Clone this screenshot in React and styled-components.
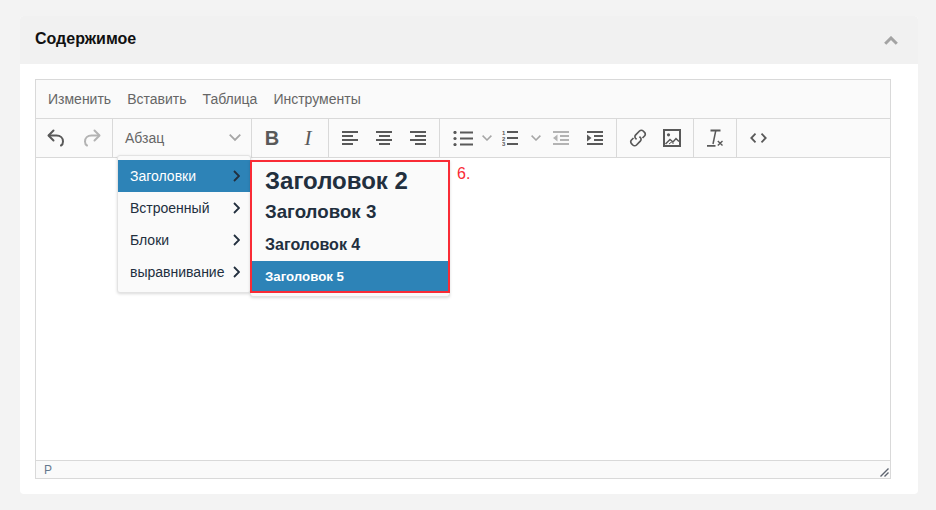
import React from "react";
import styled, { createGlobalStyle } from "styled-components";

const colors = {
  page: "#f3f3f3",
  header: "#f1f1f1",
  border: "#d9d9d9",
  bar: "#fafafa",
  icon: "#595959",
  muted: "#b3b3b3",
  chevron: "#a6a6a6",
  active: "#2d83b7",
  navy: "#222f3e",
  red: "#f92b35",
};

const GlobalStyle = createGlobalStyle`
  html, body {
    margin: 0;
    padding: 0;
    background: ${colors.page};
    font-family: "Liberation Sans", Arial, sans-serif;
  }
`;

const Chevron = ({ size = 12, color = colors.chevron }) => (
  <svg width={size} height={size * 0.6} viewBox="0 0 10 6" fill="none" stroke={color} strokeWidth="1.5">
    <path d="M.6.6 5 5 9.4.6" />
  </svg>
);

const ItemArrow = () => (
  <svg width="7" height="12" viewBox="0 0 7 12" fill="none" stroke={colors.navy} strokeWidth="1.800">
    <path d="M1 1l5 5-5 5" />
  </svg>
);

const Undo = ({ color }) => (
  <svg width="18" height="18" viewBox="0 0 18 18" fill="none" stroke={color} strokeWidth="2" strokeLinecap="round" strokeLinejoin="round">
    <path d="M6.500 1.500 1.500 6.500l5 5" />
    <path d="M2 6.500h7.500c4 0 6.500 2.500 6.500 6 0 2-1 3.500-2 4" />
  </svg>
);

const Redo = ({ color }) => (
  <svg width="18" height="18" viewBox="0 0 18 18" fill="none" stroke={color} strokeWidth="2" strokeLinecap="round" strokeLinejoin="round">
    <path d="M11.500 1.500l5 5-5 5" />
    <path d="M16 6.500H8.500c-4 0-6.500 2.500-6.500 6 0 2 1 3.500 2 4" />
  </svg>
);

const Align = ({ mode }) => {
  const short = mode === "center" ? 3 : mode === "right" ? 5 : 0;
  return (
    <svg width="16" height="14" viewBox="0 0 16 14" fill={colors.icon}>
      <rect x="0" y="0" width="16" height="2" />
      <rect x={short} y="4" width="11" height="2" />
      <rect x="0" y="8" width="16" height="2" />
      <rect x={short} y="12" width="11" height="2" />
    </svg>
  );
};

const BulletList = () => (
  <svg width="20" height="15" viewBox="0 0 20 15" fill={colors.icon}>
    <circle cx="2" cy="1.500" r="1.600" />
    <circle cx="2" cy="7.500" r="1.600" />
    <circle cx="2" cy="13.500" r="1.600" />
    <rect x="7" y="0.500" width="13" height="2" />
    <rect x="7" y="6.500" width="13" height="2" />
    <rect x="7" y="12.500" width="13" height="2" />
  </svg>
);

const NumberList = () => (
  <svg width="16" height="16" viewBox="0 0 16 16" fill={colors.icon}>
    <text x="0" y="5" fontSize="6" fontWeight="700" fontFamily="Liberation Sans">1</text>
    <text x="0" y="10.500" fontSize="6" fontWeight="700" fontFamily="Liberation Sans">2</text>
    <text x="0" y="16" fontSize="6" fontWeight="700" fontFamily="Liberation Sans">3</text>
    <rect x="5" y="1" width="11" height="2" />
    <rect x="5" y="7" width="11" height="2" />
    <rect x="5" y="13" width="11" height="2" />
  </svg>
);

const Indent = ({ out, color }) => (
  <svg width="16" height="14" viewBox="0 0 16 14" fill={color}>
    <rect x="0" y="0" width="16" height="2" />
    <rect x="7" y="4" width="9" height="2" />
    <rect x="7" y="8" width="9" height="2" />
    <rect x="0" y="12" width="16" height="2" />
    <path d={out ? "M4.500 3.500v7L0 7z" : "M0 3.500v7L4.500 7z"} />
  </svg>
);

const LinkIcon = () => (
  <svg width="18" height="18" viewBox="0 0 18 18" fill="none" stroke={colors.icon} strokeWidth="1.700">
    <path d="M7.600 10.400l-.9-.9a2.600 2.600 0 0 1 0-3.700l3.800-3.800a2.600 2.600 0 0 1 3.700 0l1.300 1.300a2.600 2.600 0 0 1 0 3.700l-2 2" />
    <path d="M10.400 7.600l.9.9a2.600 2.600 0 0 1 0 3.700l-3.800 3.800a2.600 2.600 0 0 1-3.700 0l-1.300-1.300a2.600 2.600 0 0 1 0-3.700l2-2" />
  </svg>
);

const ImageIcon = () => (
  <svg width="18" height="18" viewBox="0 0 18 18" fill="none">
    <rect x="1" y="1" width="16" height="16" stroke={colors.icon} strokeWidth="2" />
    <circle cx="5.500" cy="5.800" r="1.600" fill={colors.icon} />
    <path d="M2.500 15 7 10.500l3 2.500 3-3.500 3 3" stroke={colors.icon} strokeWidth="1.500" />
    <path d="M6 15l2.500-2 2 2" stroke={colors.icon} strokeWidth="1" />
  </svg>
);

const ClearIcon = () => (
  <svg width="17" height="18" viewBox="0 0 17 18" fill="none" stroke={colors.icon}>
    <path d="M3.500 1.500h10" strokeWidth="1.800" />
    <path d="M8.800 1.500 6 15" strokeWidth="1.500" />
    <path d="M0 16.800h8.500" strokeWidth="1.800" />
    <path d="M10.800 12l4.700 4.500M15.500 12l-4.700 4.500" strokeWidth="1.400" />
  </svg>
);

const CodeIcon = () => (
  <svg width="17" height="10" viewBox="0 0 17 10" fill="none" stroke={colors.icon} strokeWidth="1.800">
    <path d="M5.500.7 1.300 5l4.200 4.300M11.500.7 15.700 5l-4.200 4.300" />
  </svg>
);

const ResizeIcon = () => (
  <svg width="9" height="9" viewBox="0 0 9 9" stroke="#5e6470" strokeWidth="1.400" fill="none">
    <path d="M.5 8.500l8-8M4.500 8.500l4-4" />
  </svg>
);

function App() {
  return (
    <>
      <GlobalStyle />
      <Page>
        <Card>
          <CardHeader>
            <CardTitle>Содержимое</CardTitle>
            <CollapseIcon width="14" height="9" viewBox="0 0 14 9" fill="none" stroke="#a3a3a3" strokeWidth="3">
              <path d="M1.200 7.800 7 2l5.800 5.800" />
            </CollapseIcon>
          </CardHeader>
          <CardBody>
            <Editor>
              <MenuBar>
                <MenuLabel>Изменить</MenuLabel>
                <MenuLabel>Вставить</MenuLabel>
                <MenuLabel>Таблица</MenuLabel>
                <MenuLabel>Инструменты</MenuLabel>
              </MenuBar>
              <Toolbar>
                <Group $pad={2}>
                  <ToolBtn $w={36}><Undo color={colors.icon} /></ToolBtn>
                  <ToolBtn $w={36}><Redo color={colors.muted} /></ToolBtn>
                </Group>
                <FormatSelect>
                  <span>Абзац</span>
                  <Chevron />
                </FormatSelect>
                <Group $pad={2}>
                  <ToolBtn $w={36}><BoldGlyph>B</BoldGlyph></ToolBtn>
                  <ToolBtn $w={36}><ItalicGlyph>I</ItalicGlyph></ToolBtn>
                </Group>
                <Group $pad={4}>
                  <ToolBtn><Align mode="left" /></ToolBtn>
                  <ToolBtn><Align mode="center" /></ToolBtn>
                  <ToolBtn><Align mode="right" /></ToolBtn>
                </Group>
                <Group $pad={5} $right={4}>
                  <ToolBtn $w={36}><BulletList /></ToolBtn>
                  <ToolBtn $w={11}><Chevron size={10} /></ToolBtn>
                  <ToolBtn $w={36}><NumberList /></ToolBtn>
                  <ToolBtn $w={16}><Chevron size={10} /></ToolBtn>
                  <ToolBtn><Indent out color={colors.muted} /></ToolBtn>
                  <ToolBtn><Indent color={colors.icon} /></ToolBtn>
                </Group>
                <Group $pad={4}>
                  <ToolBtn><LinkIcon /></ToolBtn>
                  <ToolBtn><ImageIcon /></ToolBtn>
                </Group>
                <Group $pad={4}>
                  <ToolBtn><ClearIcon /></ToolBtn>
                </Group>
                <Group $pad={4} $plain>
                  <ToolBtn><CodeIcon /></ToolBtn>
                </Group>
              </Toolbar>
              <Content />
              <StatusBar>
                <span>P</span>
                <ResizeIcon />
              </StatusBar>

              <FormatMenu>
                <MenuItem $active>
                  Заголовки
                  <ItemArrow />
                </MenuItem>
                <MenuItem>
                  Встроенный
                  <ItemArrow />
                </MenuItem>
                <MenuItem>
                  Блоки
                  <ItemArrow />
                </MenuItem>
                <MenuItem>
                  выравнивание
                  <ItemArrow />
                </MenuItem>
              </FormatMenu>
              <HeadingMenu>
                <HeadingItem $size={24} $h={36} $top={6}>Заголовок 2</HeadingItem>
                <HeadingItem $size={18.720} $h={32}>Заголовок 3</HeadingItem>
                <HeadingItem $size={16} $h={33}>Заголовок 4</HeadingItem>
                <HeadingItem $size={13.280} $h={30} $active>Заголовок 5</HeadingItem>
              </HeadingMenu>
              <Highlight />
              <Note>6.</Note>
            </Editor>
          </CardBody>
        </Card>
      </Page>
    </>
  );
}

export default App;

const Page = styled.div`
  width: 936px;
  height: 510px;
  padding: 16px 18px 16px 20px;
  box-sizing: border-box;
`;
const Card = styled.div`
  height: 478px;
  background: #fff;
  border-radius: 4px;
  overflow: hidden;
  display: flex;
  flex-direction: column;
`;
const CardHeader = styled.div`
  height: 46px;
  padding: 0 20px 2px 15px;
  flex: none;
  background: ${colors.header};
  display: flex;
  align-items: center;
  justify-content: space-between;
`;
const CardTitle = styled.h3`
  margin: 0;
  font-size: 16px;
  font-weight: 700;
  color: #111;
`;
const CollapseIcon = styled.svg`
  margin-top: 3px;
`;
const CardBody = styled.div`
  flex: 1;
  padding: 15px 27px 15px 15px;
  display: flex;
`;
const Editor = styled.div`
  position: relative;
  flex: 1;
  border: 1px solid ${colors.border};
  display: flex;
  flex-direction: column;
`;
const MenuBar = styled.div`
  height: 38px;
  flex: none;
  background: ${colors.bar};
  border-bottom: 1px solid ${colors.border};
  display: flex;
  align-items: center;
  gap: 16px;
  padding-left: 12px;
`;
const MenuLabel = styled.span`
  font-size: 14px;
  color: #666;
`;
const Toolbar = styled.div`
  height: 38px;
  flex: none;
  background: ${colors.bar};
  border-bottom: 1px solid ${colors.border};
  display: flex;
`;
const Group = styled.div`
  display: flex;
  padding: 0 ${(p) => p.$right ?? p.$pad}px 0 ${(p) => p.$pad}px;
  border-right: ${(p) => (p.$plain ? "none" : `1px solid ${colors.border}`)};
`;
const ToolBtn = styled.div`
  width: ${(p) => p.$w ?? 34}px;
  display: flex;
  align-items: center;
  justify-content: center;
`;
const FormatSelect = styled.div`
  width: 138px;
  border-right: 1px solid ${colors.border};
  display: flex;
  align-items: center;
  justify-content: space-between;
  font-size: 14px;
  color: #666;
  & > span {
    margin-left: 12px;
  }
  & > svg {
    margin-right: 10px;
  }
`;
const BoldGlyph = styled.span`
  font-family: "Liberation Sans", sans-serif;
  font-weight: 700;
  font-size: 20px;
  color: ${colors.icon};
`;
const ItalicGlyph = styled.span`
  font-family: "Liberation Serif", serif;
  font-style: italic;
  font-size: 21px;
  color: ${colors.icon};
`;
const Content = styled.div`
  flex: 1;
  background: #fff;
`;
const StatusBar = styled.div`
  height: 18px;
  box-sizing: border-box;
  flex: none;
  background: ${colors.bar};
  border-top: 1px solid ${colors.border};
  display: flex;
  align-items: center;
  justify-content: space-between;
  padding: 0 0 0 8px;
  font-size: 12px;
  color: #64798e;
  & > svg {
    align-self: flex-end;
    margin-right: 1px;
    margin-bottom: 1px;
  }
`;
const FormatMenu = styled.div`
  position: absolute;
  left: 81px;
  top: 75px;
  width: 134px;
  box-sizing: border-box;
  padding: 4px 0;
  background: ${colors.bar};
  border: 1px solid #e3e3e3;
  border-radius: 3px;
  box-shadow: 0 1px 3px rgba(0, 0, 0, 0.15);
`;
const MenuItem = styled.div`
  height: 32px;
  display: flex;
  align-items: center;
  justify-content: space-between;
  padding: 0 10px 0 12px;
  font-size: 14px;
  color: ${(p) => (p.$active ? "#fff" : colors.navy)};
  background: ${(p) => (p.$active ? colors.active : "transparent")};
`;
const HeadingMenu = styled.div`
  position: absolute;
  left: 214px;
  top: 80px;
  width: 200px;
  box-sizing: border-box;
  padding-bottom: 5px;
  background: ${colors.bar};
  border: 1px solid #e3e3e3;
  border-top: none;
  border-radius: 0 0 3px 3px;
  box-shadow: 0 1px 3px rgba(0, 0, 0, 0.15);
`;
const HeadingItem = styled.div`
  height: ${(p) => p.$h}px;
  box-sizing: border-box;
  display: flex;
  align-items: center;
  padding: ${(p) => p.$top ?? 0}px 0 0 14px;
  font-size: ${(p) => p.$size}px;
  font-weight: 700;
  color: ${(p) => (p.$active ? "#fff" : colors.navy)};
  background: ${(p) => (p.$active ? colors.active : "transparent")};
`;
const Highlight = styled.div`
  position: absolute;
  left: 214px;
  top: 80px;
  width: 200px;
  height: 133px;
  box-sizing: border-box;
  border: 2px solid ${colors.red};
`;
const Note = styled.span`
  position: absolute;
  left: 421px;
  top: 85px;
  font-size: 16px;
  color: ${colors.red};
`;
